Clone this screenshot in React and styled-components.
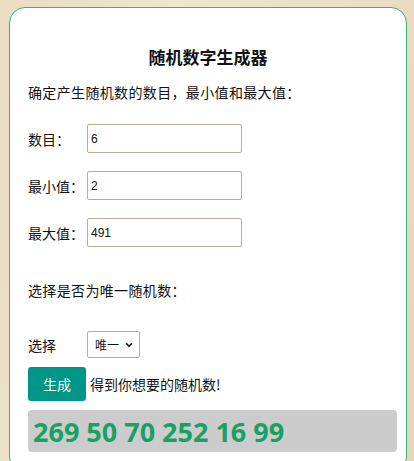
import React from "react"
import styled, { createGlobalStyle } from "styled-components"
import { ChevronDown } from "lucide-react"

const GlobalStyle = createGlobalStyle`
  html, body {
    margin: 0;
    min-height: 100%;
  }
  body {
    padding: 7px 7px 0 9px;
    background: linear-gradient(100deg, #e9dcc2 0%, #efe5d0 35%, #ebdfc8 70%, #e4d6bb 100%);
    font-family: "Open Sans", "Noto Sans CJK SC", sans-serif;
    color: #111;
    overflow: hidden;
    height: 461px;
    box-sizing: border-box;
  }
`

const Card = styled.div`
  background: #fff;
  border: 1px solid #3daf78;
  border-radius: 16px;
  padding: 0 8px 20px 18px;
`

const Title = styled.h2`
  margin: 37px 0 0 -10px;
  font-size: 17px;
  line-height: 24px;
  font-weight: 700;
  text-align: center;
  font-family: "Noto Sans CJK SC", sans-serif;
`

const Text = styled.p`
  margin: ${p => p.$top}px 0 0;
  font-size: 14px;
  line-height: 20px;
  letter-spacing: 0.35px;
  font-family: "Noto Sans CJK SC", sans-serif;
`

const Fields = styled.div`
  display: flex;
  flex-direction: column;
  gap: 18px;
  margin-top: 22px;
`

const Row = styled.div`
  display: flex;
  align-items: center;
  margin-top: ${p => p.$top || 0}px;
`

const Label = styled.label`
  width: 59px;
  font-size: 14px;
  font-family: "Noto Sans CJK SC", sans-serif;
`

const Input = styled.input`
  box-sizing: border-box;
  width: 155px;
  height: 29px;
  border: 1px solid #bcaa9c;
  border-radius: 2px;
  padding: 0 3px;
  font-family: "Liberation Sans", Arial, sans-serif;
  font-size: 12px;
  color: #111;
  outline: none;
`

const SelectWrap = styled.span`
  position: relative;
  display: inline-flex;
`

const Select = styled.select`
  appearance: none;
  box-sizing: border-box;
  width: 53px;
  height: 27px;
  border: 1px solid #bcaa9c;
  border-radius: 2px;
  background: #fff;
  padding: 0 0 0 7px;
  font-family: "Noto Sans CJK SC", sans-serif;
  font-size: 12px;
  color: #111;
  outline: none;
`

const Arrow = styled(ChevronDown)`
  position: absolute;
  right: 6px;
  top: 9px;
  pointer-events: none;
`

const Action = styled.div`
  display: flex;
  align-items: center;
  gap: 4px;
  margin-top: 9px;
  font-size: 14px;
  font-family: "Noto Sans CJK SC", sans-serif;
`

const Button = styled.button`
  width: 58px;
  height: 34px;
  border: none;
  border-radius: 3px;
  background: #009688;
  color: #fff;
  font-size: 14px;
  font-family: "Noto Sans CJK SC", sans-serif;
  padding: 0;
`

const Result = styled.div`
  margin-top: 9px;
  height: 42px;
  width: 369px;
  box-sizing: border-box;
  background: #cccccc;
  border-radius: 4px;
  padding-left: 5px;
  display: flex;
  align-items: center;
  font-family: "Open Sans", sans-serif;
  font-weight: 700;
  font-size: 27px;
  color: #17a068;
`

const fields = [
  { label: "数目：", value: "6" },
  { label: "最小值：", value: "2" },
  { label: "最大值：", value: "491" },
]

export default function App() {
  return (
    <>
      <GlobalStyle />
      <Card>
        <Title>随机数字生成器</Title>
        <Text $top={13}>确定产生随机数的数目，最小值和最大值：</Text>
        <Fields>
          {fields.map(f => (
            <Row key={f.label}>
              <Label>{f.label}</Label>
              <Input defaultValue={f.value} />
            </Row>
          ))}
        </Fields>
        <Text $top={33}>选择是否为唯一随机数：</Text>
        <Row $top={31}>
          <Label>选择</Label>
          <SelectWrap>
            <Select defaultValue="unique">
              <option value="unique">唯一</option>
              <option value="repeat">可重复</option>
            </Select>
            <Arrow size={10} strokeWidth={4} color="#111" />
          </SelectWrap>
        </Row>
        <Action>
          <Button>生成</Button>
          <span>得到你想要的随机数!</span>
        </Action>
        <Result>269 50 70 252 16 99</Result>
      </Card>
    </>
  )
}
